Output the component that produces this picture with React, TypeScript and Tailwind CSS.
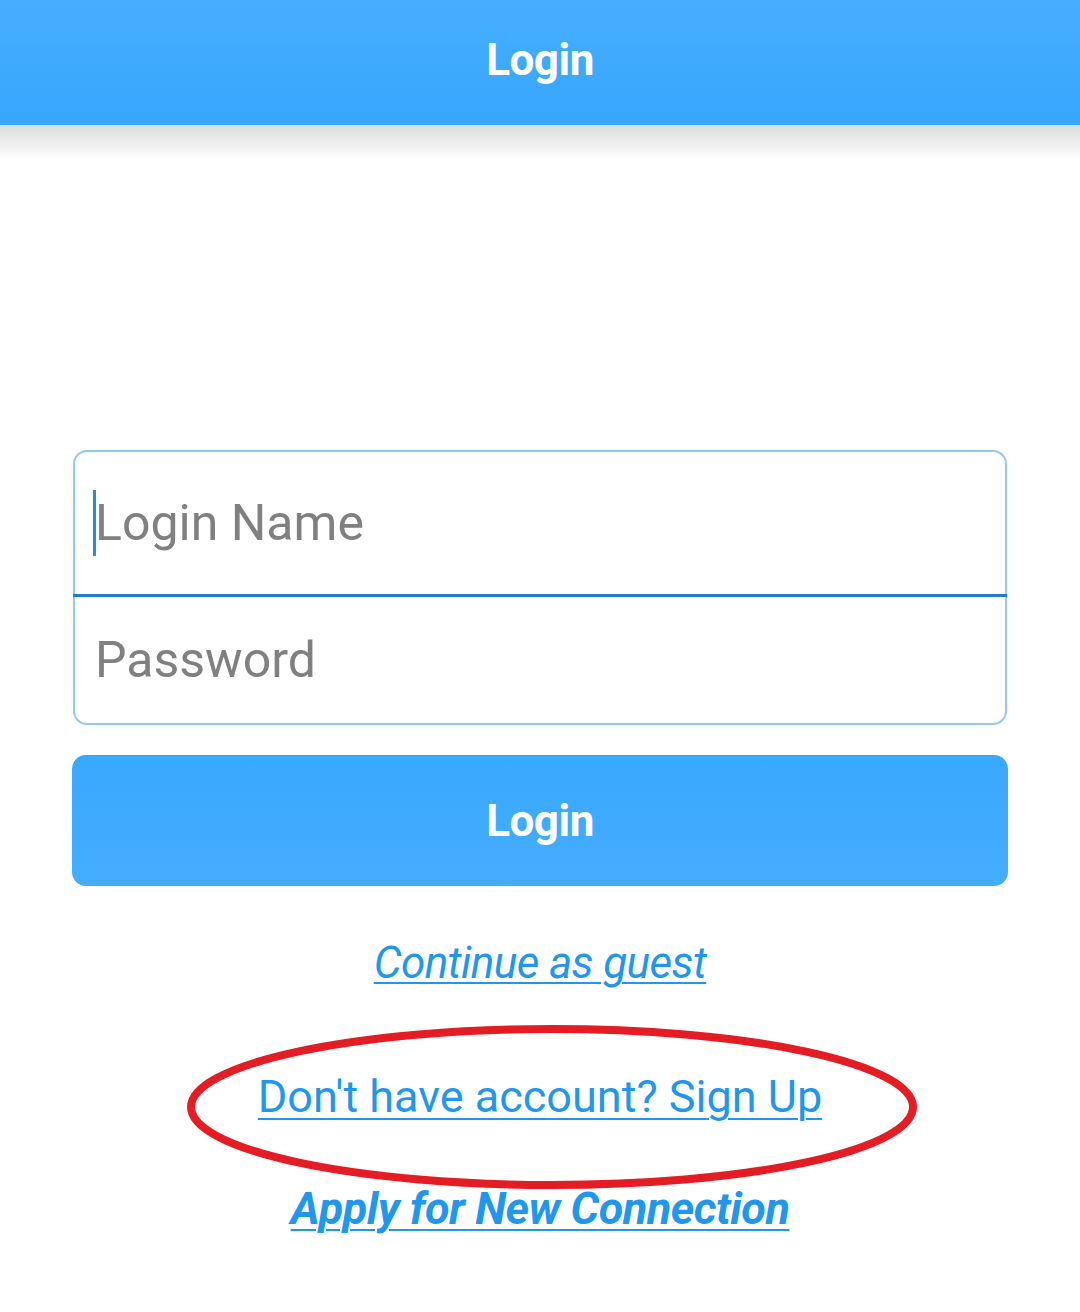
import React from "react";

export default function App() {
  return (
    <div className="relative w-[1080px] h-[1312px] bg-white overflow-hidden" style={{ fontFamily: "Roboto, 'Liberation Sans', sans-serif" }}>
      <div className="relative h-[125px] bg-gradient-to-b from-[#46aefe] to-[#36a6fd] flex items-center justify-center pb-[5px]">
        <span className="text-white font-bold text-[44px] leading-none tracking-[-0.5px]">Login</span>
      </div>
      <div className="h-[36px] bg-gradient-to-b from-[#dcdcdc] to-white" />

      <div className="mt-[289px] mx-[73px] border-2 border-[#93caec] rounded-[14px]">
        <div className="h-[142px] flex items-center pl-[18px] relative">
          <div className="w-[3px] h-[66px] bg-[#2a8bd8] -mr-[1px]" />
          <span className="text-[50px] text-[#808080] leading-none">Login Name</span>
        </div>
        <div className="h-[3px] bg-[#1e7fc6] -mx-[2px]" />
        <div className="h-[126px] flex items-center pl-[20px]">
          <span className="text-[50px] text-[#808080] leading-none">Password</span>
        </div>
      </div>

      <div className="mt-[30px] mx-[72px] h-[131px] rounded-[14px] bg-gradient-to-b from-[#38a8fe] to-[#45adfe] flex items-center justify-center">
        <span className="text-white font-bold text-[44px] leading-none tracking-[-0.5px]">Login</span>
      </div>

      <div className="flex flex-col items-center">
        <a className="mt-[55px] italic text-[44px] leading-none text-[#1f97ef] underline underline-offset-[4px] decoration-2 tracking-[-0.6px]">Continue as guest</a>
        <a className="mt-[89px] text-[45px] leading-none text-[#1f97ef] underline underline-offset-[6px] decoration-2">Don't have account? Sign Up</a>
        <a className="mt-[67px] italic font-bold text-[45px] leading-none text-[#1f97ef] underline underline-offset-[5px] decoration-2 tracking-[-0.5px]">Apply for New Connection</a>
      </div>

      <svg className="absolute left-0 top-0 pointer-events-none" width="1080" height="1312">
        <ellipse cx="552" cy="1107" rx="361" ry="78" fill="none" stroke="#e41d25" strokeWidth="8" />
      </svg>
    </div>
  );
}
